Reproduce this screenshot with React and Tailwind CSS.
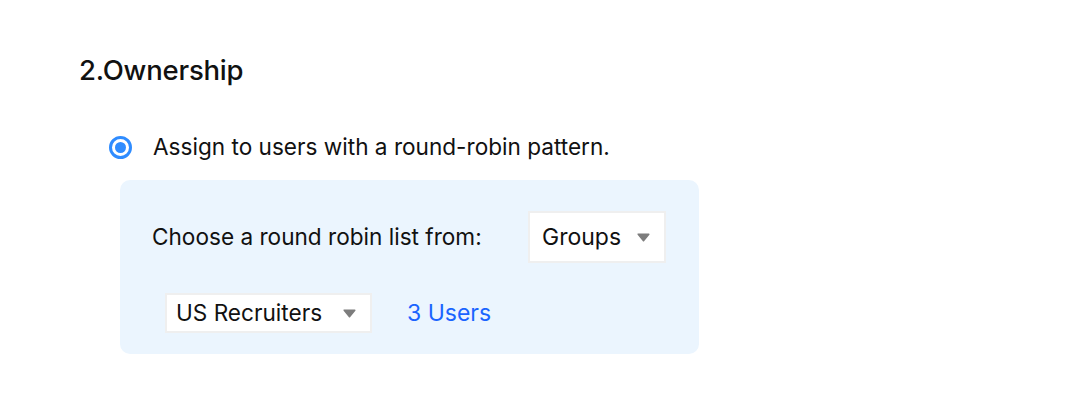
import React from 'react';

function Caret() {
  return (
    <svg width="13" height="9" viewBox="0 0 13 9" className="shrink-0">
      <path d="M1.2 1.2 H11.8 L6.5 7.8 Z" fill="#7d7d7d" stroke="#7d7d7d" strokeWidth="1.5" strokeLinejoin="round" />
    </svg>
  );
}

export default function App() {
  return (
    <div className="w-[1089px] h-[408px] bg-white text-[#111] font-['Inter',sans-serif]">
      <div className="pl-[79px] pt-[52px]">
        <h2 className="text-[27.5px] leading-[36px] font-medium tracking-[-0.2px]">2.Ownership</h2>

        <div className="mt-[44px] ml-[30px] flex items-center h-[30px]">
          <span className="w-[23px] h-[23px] rounded-full border-[3px] border-[#2f8cff] flex items-center justify-center">
            <span className="w-[11px] h-[11px] rounded-full bg-[#2f8cff]" />
          </span>
          <span className="ml-[21px] text-[22.6px] leading-[30px]">Assign to users with a round-robin pattern.</span>
        </div>

        <div className="mt-[18px] ml-[41px] w-[579px] h-[174px] rounded-[10px] bg-[#ebf5fe] pl-[32px] pt-[31px]">
          <div className="flex items-center">
            <span className="text-[22.6px] leading-[28px] w-[376px]">Choose a round robin list from:</span>
            <div className="w-[138px] h-[52px] bg-white border-2 border-[#efefef] flex items-center pl-[12px]">
              <span className="text-[23px] leading-[28px] w-[95px]">Groups</span>
              <Caret />
            </div>
          </div>
          <div className="mt-[30px] ml-[13px] flex items-center">
            <div className="w-[207px] h-[40px] bg-white border-2 border-[#efefef] flex items-center pl-[9px]">
              <span className="text-[22.6px] leading-[28px] w-[167px]">US Recruiters</span>
              <Caret />
            </div>
            <span className="ml-[35px] text-[23px] leading-[28px] text-[#1a64ff]">3 Users</span>
          </div>
        </div>
      </div>
    </div>
  );
}
